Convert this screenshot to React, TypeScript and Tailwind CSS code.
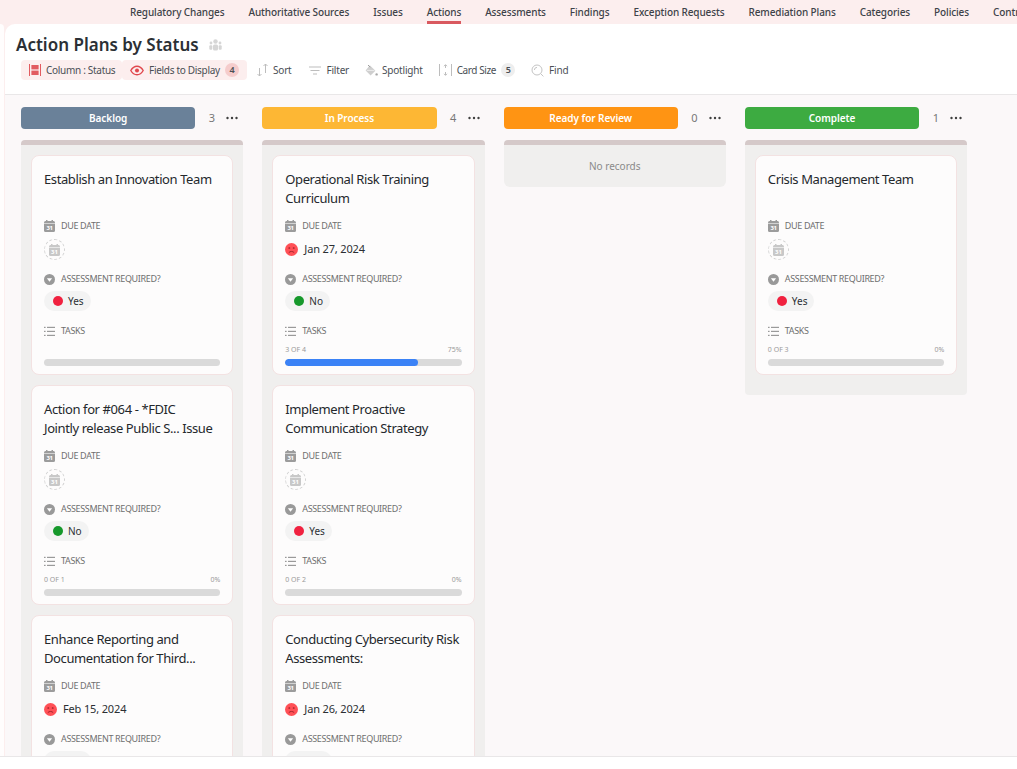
const navItems = [
  "Regulatory Changes",
  "Authoritative Sources",
  "Issues",
  "Actions",
  "Assessments",
  "Findings",
  "Exception Requests",
  "Remediation Plans",
  "Categories",
  "Policies",
  "Controls",
];

interface CardData {
  title: string;
  date?: string;
  required?: "Yes" | "No";
  tasks?: { done: number; total: number };
}

interface ColumnData {
  name: string;
  color: string;
  count: number;
  cards: CardData[];
}

const columns: ColumnData[] = [
  {
    name: "Backlog",
    color: "bg-[#6a8199]",
    count: 3,
    cards: [
      { title: "Establish an Innovation Team", required: "Yes" },
      {
        title: "Action for #064 - *FDIC\nJointly release Public S... Issue",
        required: "No",
        tasks: { done: 0, total: 1 },
      },
      { title: "Enhance Reporting and\nDocumentation for Third...", date: "Feb 15, 2024", required: "Yes" },
    ],
  },
  {
    name: "In Process",
    color: "bg-[#fdb734]",
    count: 4,
    cards: [
      {
        title: "Operational Risk Training\nCurriculum",
        date: "Jan 27, 2024",
        required: "No",
        tasks: { done: 3, total: 4 },
      },
      {
        title: "Implement Proactive\nCommunication Strategy",
        required: "Yes",
        tasks: { done: 0, total: 2 },
      },
      { title: "Conducting Cybersecurity Risk\nAssessments:", date: "Jan 26, 2024", required: "Yes" },
    ],
  },
  { name: "Ready for Review", color: "bg-[#ff9413]", count: 0, cards: [] },
  {
    name: "Complete",
    color: "bg-[#3dab41]",
    count: 1,
    cards: [{ title: "Crisis Management Team", required: "Yes", tasks: { done: 0, total: 3 } }],
  },
];

function CalendarIcon({ light }: { light?: boolean }) {
  const fill = light ? "#c8c8c8" : "#9c9c9c";
  return (
    <svg width="11" height="12" viewBox="0 0 11 12" className="shrink-0">
      <rect x="0" y="1" width="11" height="11" rx="1.5" fill={fill} />
      <rect x="2" y="0" width="1.5" height="2" fill={fill} />
      <rect x="7.5" y="0" width="1.5" height="2" fill={fill} />
      <rect x="0" y="3" width="11" height="0.8" fill="#ffffff" opacity="0.7" />
      <text x="5.5" y="10.4" textAnchor="middle" fontSize="6" fontWeight="700" fill="#ffffff">
        31
      </text>
    </svg>
  );
}

function SadIcon() {
  return (
    <svg width="13" height="13" viewBox="0 0 13 13" className="shrink-0">
      <circle cx="6.5" cy="6.5" r="6.5" fill="#ff5056" />
      <rect x="3.4" y="4.2" width="1.8" height="1.6" rx="0.6" fill="#a3262b" />
      <rect x="7.8" y="4.2" width="1.8" height="1.6" rx="0.6" fill="#a3262b" />
      <path d="M3.8 9.6c1.4-1.5 4-1.5 5.4 0" fill="none" stroke="#a3262b" strokeWidth="1" />
    </svg>
  );
}

function DropIcon() {
  return (
    <svg width="11" height="11" viewBox="0 0 11 11" className="shrink-0">
      <circle cx="5.5" cy="5.5" r="5.5" fill="#999999" />
      <path d="M2.9 4.2h5.2L5.5 7.8z" fill="#ffffff" />
    </svg>
  );
}

function TasksIcon() {
  return (
    <svg width="11" height="11" viewBox="0 0 11 11" className="shrink-0" fill="#9a9a9a">
      <rect x="0" y="0.8" width="1.6" height="1.2" />
      <rect x="3" y="0.8" width="8" height="1.2" />
      <rect x="0" y="4.8" width="1.6" height="1.2" />
      <rect x="3" y="4.8" width="8" height="1.2" />
      <rect x="0" y="8.8" width="1.6" height="1.2" />
      <rect x="3" y="8.8" width="8" height="1.2" />
    </svg>
  );
}

function DotsIcon() {
  return (
    <svg width="12" height="4" viewBox="0 0 12 4" fill="#3f3f3f" className="shrink-0">
      <circle cx="1.5" cy="2" r="1.2" />
      <circle cx="6" cy="2" r="1.2" />
      <circle cx="10.5" cy="2" r="1.2" />
    </svg>
  );
}

function FieldLabel({ children, icon }: { children: string; icon: React.ReactNode }) {
  return (
    <div className="flex h-3 items-center gap-[6px] text-[9px] leading-3 tracking-[-0.35px] text-[#6f6f6f]">
      {icon}
      <span>{children}</span>
    </div>
  );
}

function Card({ card }: { card: CardData }) {
  const percent = card.tasks ? Math.round((card.tasks.done / card.tasks.total) * 100) : 0;
  return (
    <div className="box-border h-[220px] shrink-0 rounded-lg border border-[#f3e2e2] bg-[#fdfcfc] px-3 pt-[14px]">
      <div className="h-[38px] text-[13px] leading-[19px] tracking-[-0.4px] whitespace-pre text-[#24282c]">
        {card.title}
      </div>
      <div className="mt-3">
        <FieldLabel icon={<CalendarIcon />}>DUE DATE</FieldLabel>
      </div>
      <div className="mt-[7px] flex h-[21px] items-center">
        {card.date ? (
          <div className="flex items-center gap-[6px] text-[11px] tracking-[-0.15px] text-[#2b2f33]">
            <SadIcon />
            {card.date}
          </div>
        ) : (
          <div className="flex h-[21px] w-[21px] items-center justify-center rounded-full border border-dashed border-[#d2d2d2]">
            <CalendarIcon light />
          </div>
        )}
      </div>
      <div className="mt-[13px]">
        <FieldLabel icon={<DropIcon />}>ASSESSMENT REQUIRED?</FieldLabel>
      </div>
      <div className="mt-[6px] flex h-5 w-fit items-center gap-[5px] rounded-full bg-[#f3f3f3] pr-[7px] pl-[9px] text-[10px] text-[#2b2f33]">
        <span className={`h-[10px] w-[10px] rounded-full ${card.required === "No" ? "bg-[#16982b]" : "bg-[#f0213f]"}`} />
        {card.required}
      </div>
      <div className="mt-[14px]">
        <FieldLabel icon={<TasksIcon />}>TASKS</FieldLabel>
      </div>
      <div className="mt-[9px] flex h-[8px] items-center justify-between text-[7px] leading-2 text-[#9a9a9a]">
        {card.tasks ? (
          <>
            <span>
              {card.tasks.done} OF {card.tasks.total}
            </span>
            <span>{percent}%</span>
          </>
        ) : null}
      </div>
      <div className="mt-[5px] h-[7px] overflow-hidden rounded-full bg-[#dadada]">
        <div className="h-full rounded-full bg-[#3b82f6]" style={{ width: `${percent}%` }} />
      </div>
    </div>
  );
}

function Column({ column }: { column: ColumnData }) {
  return (
    <div className="w-[222.4px] shrink-0">
      <div className="flex h-[22px] items-center">
        <div
          className={`flex h-[22px] w-[174.3px] items-center justify-center rounded text-[10px] font-semibold tracking-[-0.05px] text-white ${column.color}`}
        >
          {column.name}
        </div>
        <span className="ml-[13.5px] w-[6px] text-[11px] text-[#777777]">{column.count}</span>
        <span className="ml-[11.5px]">
          <DotsIcon />
        </span>
      </div>
      <div className="mt-[11px] rounded-t-[4px] border-t-[5px] border-[#d5c9c9]">
        {column.cards.length === 0 ? (
          <div className="flex h-[42px] items-center justify-center rounded-b-md bg-[#f0efee] text-[10px] text-[#8a8a8a]">
            No records
          </div>
        ) : (
          <div className="flex flex-col gap-[10px] rounded-b-[4px] bg-[#f0efee] px-[10px] pt-[10px] pb-[20px]">
            {column.cards.map((card) => (
              <Card key={card.title} card={card} />
            ))}
          </div>
        )}
      </div>
    </div>
  );
}

function Tool({
  icon,
  label,
  badge,
  className,
}: {
  icon: React.ReactNode;
  label: string;
  badge?: string;
  className: string;
}) {
  return (
    <div className={`flex h-5 items-center text-[10px] text-[#4a4f55] ${className}`}>
      {icon}
      <span>{label}</span>
      {badge ? (
        <span className="flex h-[14px] w-[14px] items-center justify-center rounded-full bg-[#eeeeee] text-[9px] font-semibold">
          {badge}
        </span>
      ) : null}
    </div>
  );
}

export default function App() {
  return (
    <div className="flex h-[769px] flex-col overflow-hidden bg-white font-['Noto_Sans',sans-serif]">
      <nav className="flex h-6 shrink-0 gap-6 overflow-hidden bg-[#fceeee] pl-[130px] text-[10px] font-medium tracking-[-0.11px] text-[#3d4248]">
        {navItems.map((item) => (
          <div
            key={item}
            className={`flex h-6 shrink-0 items-center border-b-[3px] pt-[3px] ${
              item === "Actions" ? "border-[#d9595f]" : "border-transparent"
            }`}
          >
            {item}
          </div>
        ))}
      </nav>
      <div className="flex min-h-0 flex-1 bg-[#fceeee]">
        <div className="w-1 shrink-0 rounded-tr-md bg-[#fffdfd]" />
        <main className="ml-px flex min-w-0 flex-1 flex-col overflow-hidden rounded-tl-[10px] bg-white">
          <header className="h-[71px] shrink-0 border-b border-[#e9e7e8]">
            <div className="flex h-9 items-center gap-[10px] pt-[6px] pl-[11px]">
              <h1 className="text-[17px] leading-6 font-semibold text-[#2b3035]">Action Plans by Status</h1>
              <svg width="13" height="12" viewBox="0 0 13 12" fill="#d6d6d6">
                <circle cx="6.5" cy="2.5" r="2.2" />
                <rect x="4" y="5.5" width="5" height="6" rx="1.5" />
                <circle cx="2" cy="4" r="1.4" />
                <rect x="0.3" y="6.2" width="3" height="4.6" rx="1" />
                <circle cx="11" cy="4" r="1.4" />
                <rect x="9.7" y="6.2" width="3" height="4.6" rx="1" />
              </svg>
            </div>
            <div className="flex h-5 items-center pl-4">
              <div className="flex h-5 w-[101px] items-center gap-[5px] rounded bg-[#fceeee] pl-[8px] text-[10px] tracking-[-0.3px] text-[#4a4f55]">
                <svg width="12" height="12" viewBox="0 0 12 12" fill="#e25b60">
                  <rect x="0" y="0" width="1" height="12" />
                  <rect x="11" y="0" width="1" height="12" />
                  <rect x="2.4" y="1" width="7.2" height="4.4" />
                  <rect x="2.4" y="6.6" width="7.2" height="4.4" />
                </svg>
                Column : Status
              </div>
              <div className="flex h-5 w-[125px] items-center gap-[5px] rounded bg-[#fceeee] pl-[8px] text-[10px] tracking-[-0.3px] text-[#4a4f55]">
                <svg width="14" height="13" viewBox="0 0 14 13" fill="none">
                  <path d="M0.8 6.5C2.4 3.7 4.5 2.2 7 2.2s4.6 1.5 6.2 4.3c-1.6 2.8-3.7 4.3-6.2 4.3S2.4 9.3.8 6.5z" stroke="#e0474d" strokeWidth="1.4" />
                  <circle cx="7" cy="6.5" r="2" fill="#e0474d" />
                </svg>
                Fields to Display
                <span className="flex h-[14px] w-[14px] items-center justify-center rounded-full bg-[#f5cccc] text-[9px] font-semibold">
                  4
                </span>
              </div>
              <div className="ml-[9px] flex items-center gap-4">
                <Tool
                  label="Sort"
                  className="mr-[2px] gap-[4px] tracking-[-0.2px]"
                  icon={
                    <svg width="13" height="14" viewBox="0 0 13 14" fill="none" stroke="#bdbdbd" strokeWidth="1">
                      <path d="M3.5 5v8M1.5 11l2 2 2-2M9.5 10V1M7.5 3l2-2 2 2" />
                    </svg>
                  }
                />
                <Tool
                  label="Filter"
                  className="gap-[5px] tracking-[-0.2px]"
                  icon={
                    <svg width="12" height="9" viewBox="0 0 12 9" fill="none" stroke="#bdbdbd" strokeWidth="1">
                      <path d="M0 1h12M1.5 4.5h9M4 8h4" />
                    </svg>
                  }
                />
                <Tool
                  label="Spotlight"
                  className="gap-[4px] tracking-[-0.2px]"
                  icon={
                    <svg width="13" height="13" viewBox="0 0 13 13" fill="#cfcfcf">
                      <path d="M4.8 1.2 10.4 6.8 5.6 11.4 0.6 6.6z" />
                      <path d="M1.8 6.4h7.6" stroke="#ffffff" strokeWidth="0.6" />
                      <path d="M3 1l2.2 2.2" stroke="#9f9f9f" strokeWidth="1" />
                      <circle cx="11.6" cy="10.4" r="1.2" fill="#a8a8a8" />
                    </svg>
                  }
                />
                <Tool
                  label="Card Size"
                  badge="5"
                  className="gap-[5px] tracking-[-0.4px]"
                  icon={
                    <svg width="13" height="14" viewBox="0 0 13 14" fill="none" stroke="#bdbdbd" strokeWidth="1">
                      <path d="M0.5 1v12M12.5 1v12M6.5 2v3M6.5 9v3M5 3.2l1.5-1.6L8 3.2M5 10.8l1.5 1.6L8 10.8" />
                    </svg>
                  }
                />
                <Tool
                  label="Find"
                  className="gap-[5px] tracking-[-0.2px]"
                  icon={
                    <svg width="13" height="13" viewBox="0 0 13 13" fill="none" stroke="#c4c4c4" strokeWidth="1">
                      <circle cx="6" cy="6" r="5" />
                      <path d="M9.6 9.6 12.4 12.4M3.4 6a2.6 2.6 0 0 1 2.6-2.6" />
                    </svg>
                  }
                />
              </div>
            </div>
          </header>
          <div className="flex min-h-0 flex-1 items-start gap-[18.9px] overflow-hidden bg-[#fbf8f9] pt-3 pl-4">
            {columns.map((column) => (
              <Column key={column.name} column={column} />
            ))}
          </div>
        </main>
      </div>
      <div className="h-[13px] shrink-0 border-t border-[#e9e7e8] bg-white" />
    </div>
  );
}
